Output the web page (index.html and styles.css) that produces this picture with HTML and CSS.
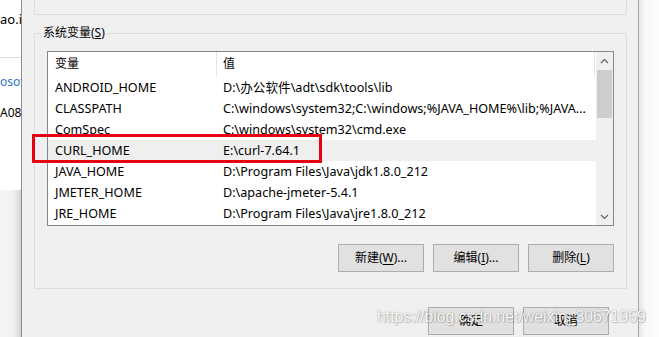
FILE: index.html
```html
<!DOCTYPE html>
<html lang="zh-CN">
<head>
<meta charset="utf-8">
<title>系统变量</title>
<link rel="stylesheet" href="styles.css">
</head>
<body>
<div class="screen">
  <div class="behind">
    <div class="behind-win">
      <div class="bw-line1">ao.in</div>
      <div class="bw-sep"></div>
      <div class="bw-link">osoft</div>
      <div class="bw-text">A0872</div>
    </div>
    <div class="behind-shadow"></div>
  </div>
  <div class="dialog">
    <div class="group-top"></div>
    <div class="group-sys">
      <div class="group-label">系统变量(<u>S</u>)</div>
      <div class="listview">
        <div class="lv-main">
          <div class="lv-header">
            <div class="col1">变量</div>
            <div class="col2">值</div>
            <div class="col3"></div>
          </div>
          <div class="lv-row"><div class="col1">ANDROID_HOME</div><div class="col2">D:\办公软件\adt\sdk\tools\lib</div></div>
          <div class="lv-row"><div class="col1">CLASSPATH</div><div class="col2">C:\windows\system32;C:\windows;%JAVA_HOME%\lib;%JAVA...</div></div>
          <div class="lv-row"><div class="col1">ComSpec</div><div class="col2">C:\windows\system32\cmd.exe</div></div>
          <div class="lv-row selected"><div class="col1">CURL_HOME</div><div class="col2">E:\curl-7.64.1</div></div>
          <div class="lv-row"><div class="col1">JAVA_HOME</div><div class="col2">D:\Program Files\Java\jdk1.8.0_212</div></div>
          <div class="lv-row"><div class="col1">JMETER_HOME</div><div class="col2">D:\apache-jmeter-5.4.1</div></div>
          <div class="lv-row"><div class="col1">JRE_HOME</div><div class="col2">D:\Program Files\Java\jre1.8.0_212</div></div>
        </div>
        <div class="scrollbar">
          <div class="sb-btn">
            <svg width="9" height="6" viewBox="0 0 9 6"><path d="M1 5 L4.5 1.5 L8 5" fill="none" stroke="#606060" stroke-width="1.2"/></svg>
          </div>
          <div class="sb-track"><div class="sb-thumb"></div></div>
          <div class="sb-btn">
            <svg width="9" height="6" viewBox="0 0 9 6"><path d="M1 1 L4.5 4.5 L8 1" fill="none" stroke="#606060" stroke-width="1.2"/></svg>
          </div>
        </div>
      </div>
      <div class="btn-row">
        <button class="btn">新建(<u>W</u>)...</button>
        <button class="btn">编辑(<u>I</u>)...</button>
        <button class="btn">删除(<u>L</u>)</button>
      </div>
    </div>
    <div class="dlg-buttons">
      <button class="btn">确定</button>
      <button class="btn">取消</button>
    </div>
  </div>
  <div class="outside"></div>
  <div class="redbox"></div>
  <div class="watermark">https://blog.csdn.net/weixin_30671959</div>
</div>
</body>
</html>
```

FILE: styles.css
```css
* { box-sizing: border-box; }
html, body { margin: 0; padding: 0; background: #fff; }
body {
  font-family: "Noto Sans", "Noto Sans CJK SC", sans-serif;
  font-size: 12px;
  color: #000;
}
.screen {
  position: relative;
  width: 659px;
  height: 337px;
  overflow: hidden;
  display: flex;
}

/* window behind (left strip) */
.behind {
  width: 21px;
  display: flex;
  flex-direction: column;
  overflow: hidden;
}
.behind-win {
  height: 190px;
  background: #fff;
  white-space: nowrap;
}
.bw-line1 {
  margin-top: 11px;
  font-size: 13px;
  line-height: 16px;
}
.bw-sep {
  margin-top: 30px;
  height: 1px;
  background: #dedede;
}
.bw-link {
  margin-top: 16px;
  font-size: 12px;
  line-height: 15px;
  color: #2b73c8;
}
.bw-text {
  margin-top: 16px;
  font-size: 12px;
  line-height: 15px;
}
.behind-shadow {
  flex: 1;
  background: linear-gradient(to right, #f5f5f5 0, #f3f3f3 12px, #e2e2e2 18px, #cfcfcf 21px);
}

/* dialog */
.dialog {
  width: 618px;
  height: 337px;
  background: #f0f0f0;
  border-left: 1px solid #8e8e8e;
  border-right: 1px solid #a8a8a8;
  display: flex;
  flex-direction: column;
}
.group-top {
  margin-left: 12px;
  width: 593px;
  height: 15px;
  border: 1px solid #dcdcdc;
  border-top: none;
}
.group-sys {
  margin-top: 18px;
  margin-left: 12px;
  width: 593px;
  height: 256px;
  border: 1px solid #dcdcdc;
  display: flex;
  flex-direction: column;
}
.group-label {
  margin-top: -9px;
  margin-left: 6px;
  padding: 0 2px;
  width: fit-content;
  height: 16px;
  line-height: 16px;
  background: #f0f0f0;
}
.listview {
  margin-top: 10px;
  margin-left: 12px;
  width: 567px;
  height: 175px;
  border: 1px solid #828790;
  display: flex;
  background: #fff;
}
.lv-main {
  flex: 1;
  display: flex;
  flex-direction: column;
  overflow: hidden;
}
.lv-header {
  height: 25px;
  display: flex;
  align-items: stretch;
  line-height: 24px;
}
.lv-header .col1 { width: 168px; padding-left: 7px; }
.lv-header .col2 { flex: 1; padding-left: 6px; border-left: 1px solid #e5e5e5; margin-bottom: 1px; }
.lv-header .col3 { width: 2px; border-left: 1px solid #e5e5e5; margin-bottom: 1px; }
.lv-row {
  height: 21px;
  line-height: 21px;
  font-size: 12.6px;
  display: flex;
  white-space: nowrap;
}
.lv-row .col1 { width: 168px; padding-left: 7px; }
.lv-row .col2 { flex: 1; padding-left: 7px; overflow: hidden; }
.lv-row.selected { background: #efefef; }

.scrollbar {
  width: 17px;
  background: #f0f0f0;
  display: flex;
  flex-direction: column;
}
.sb-btn {
  height: 17px;
  display: flex;
  align-items: center;
  justify-content: center;
}
.sb-btn svg { display: block; }
.sb-track {
  flex: 1;
  padding: 1px 1px 0;
}
.sb-thumb {
  height: 48px;
  background: #cdcdcd;
}

.btn-row {
  margin-top: 18px;
  margin-left: 12px;
  width: 567px;
  display: flex;
  justify-content: flex-end;
  gap: 9px;
}
.btn {
  width: 86px;
  height: 28px;
  padding: 0;
  background: #e1e1e1;
  border: 1px solid #adadad;
  font-family: "Noto Sans", "Noto Sans CJK SC", sans-serif;
  font-size: 12px;
  color: #000;
  line-height: 26px;
}
.btn u { text-underline-offset: 2px; }

.dlg-buttons {
  margin-top: 18px;
  display: flex;
  justify-content: flex-end;
  gap: 9px;
  padding-right: 29px;
}

.outside {
  flex: 1;
  background: linear-gradient(to right, #e4e4e4 0, #f6f6f6 5px, #fbfbfb 12px, #fdfdfd 20px);
}

/* overlays */
.redbox {
  position: absolute;
  left: 32px;
  top: 134px;
  width: 290px;
  height: 29px;
  border: 3px solid #e60012;
}
.watermark {
  position: absolute;
  left: 377px;
  top: 307px;
  font-family: "Liberation Sans", Arial, sans-serif;
  font-size: 15.8px;
  line-height: 20px;
  color: rgba(255, 255, 255, 0.95);
  text-shadow: 0 0 1.5px rgba(0, 0, 0, 0.4), 1px 1px 1px rgba(0, 0, 0, 0.15);
  white-space: nowrap;
}
```
